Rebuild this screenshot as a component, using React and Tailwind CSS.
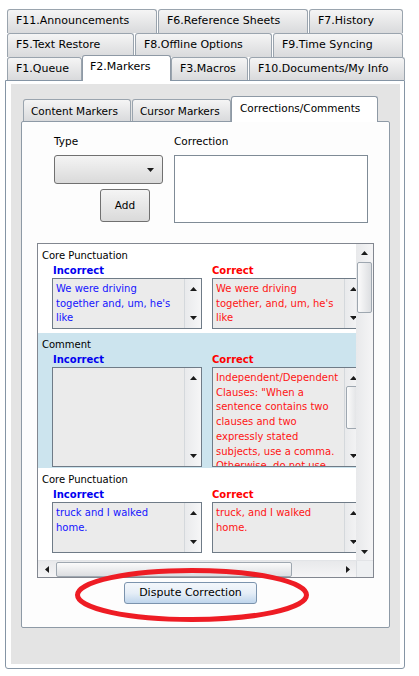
import React from 'react';

const font = "font-['DejaVu_Sans',sans-serif]";

function Tri({ dir = 'up', className = '' }) {
  const pts = {
    up: '0,4 7,4 3.5,0',
    down: '0,0 7,0 3.5,4',
    left: '4,0 4,7 0,3.5',
    right: '0,0 0,7 4,3.5',
  }[dir];
  const vertical = dir === 'up' || dir === 'down';
  return (
    <svg width={vertical ? 7 : 4} height={vertical ? 4 : 7} className={className}>
      <polygon points={pts} fill="#1a1a1a" />
    </svg>
  );
}

function TopTab({ label, w, selected }) {
  if (selected) {
    return (
      <div
        className={`relative z-10 h-[26px] -mb-px border-x border-t border-[#8e99a5] rounded-t-[3px] bg-white pl-[7px] text-[11px] leading-[21px] text-black whitespace-nowrap`}
        style={{ width: w }}
      >
        {label}
      </div>
    );
  }
  return (
    <div
      className="h-full border-x border-t border-[#9aa4ae] rounded-t-[3px] bg-linear-to-b from-[#f5f5f5] to-[#d9dadc] pl-[8px] text-[11px] leading-[22px] text-black whitespace-nowrap"
      style={{ width: w }}
    >
      {label}
    </div>
  );
}

function InnerTab({ label, w, selected }) {
  if (selected) {
    return (
      <div
        className="relative z-10 h-[26px] -mb-px border-x border-t border-[#8e99a5] rounded-t-[3px] bg-white pl-[8px] text-[10.5px] leading-[22px] text-black whitespace-nowrap"
        style={{ width: w }}
      >
        {label}
      </div>
    );
  }
  return (
    <div
      className="h-full border-x border-t border-[#9aa4ae] rounded-t-[3px] bg-linear-to-b from-[#f5f5f5] to-[#d9dadc] pl-[7px] text-[10.5px] leading-[22px] text-black whitespace-nowrap"
      style={{ width: w }}
    >
      {label}
    </div>
  );
}

function BoxScroll({ thumb }) {
  return (
    <div className="w-[17px] shrink-0 flex flex-col border-l border-[#d4d8dc] bg-linear-to-r from-[#e9eaec] to-[#f6f6f7]">
      <div className="h-[17px] flex items-center justify-center pt-[3px]">
        <Tri dir="up" />
      </div>
      {thumb ? (
        <div className="mx-[1px] mt-px h-[43px] rounded-[2px] border border-[#9ea7b0] bg-linear-to-r from-[#fbfbfb] to-[#dcdee1]" />
      ) : null}
      <div className="flex-1" />
      <div className="h-[17px] flex items-center justify-center pb-[3px]">
        <Tri dir="down" />
      </div>
    </div>
  );
}

function TextBox({ lines, color, h, thumb }) {
  return (
    <div
      className="w-[150px] shrink-0 flex border border-[#6f7b87] bg-[#ebebeb]"
      style={{ height: h }}
    >
      <div className={`flex-1 overflow-hidden pl-[3px] pt-[3px] text-[10px] leading-[14.7px] whitespace-nowrap ${color}`}>
        {lines.map((l, i) => (
          <div key={i}>{l}</div>
        ))}
      </div>
      <BoxScroll thumb={thumb} />
    </div>
  );
}

function Item({ title, incorrect, correct, h, selected, pb, thumb }) {
  return (
    <div className={`pt-[4px] ${selected ? 'bg-[#cce4ee]' : ''}`} style={{ paddingBottom: pb }}>
      <div className="h-[15px] pl-[4px] text-[10px] leading-[15px] text-black">{title}</div>
      <div className="h-[15px] flex text-[10px] leading-[15px] font-bold">
        <div className="w-[174px] pl-[15px] text-[#0000f0]">Incorrect</div>
        <div className="text-[#ff0000]">Correct</div>
      </div>
      <div className="flex pl-[14px] gap-[10px] w-[400px]">
        <TextBox lines={incorrect} color="text-[#1414ff]" h={h} />
        <TextBox lines={correct} color="text-[#ff1414]" h={h} thumb={thumb} />
      </div>
    </div>
  );
}

export default function App() {
  return (
    <div className={`relative w-[419px] h-[676px] bg-white overflow-hidden ${font}`}>
      {/* top tab rows */}
      <div className="pt-[9px] pl-[7px]">
        <div className="flex h-[24px] gap-[1px]">
          <TopTab label="F11.Announcements" w={150} />
          <TopTab label="F6.Reference Sheets" w={150} />
          <TopTab label="F7.History" w={94} />
        </div>
        <div className="flex h-[24px] gap-[1px]">
          <TopTab label="F5.Text Restore" w={127} />
          <TopTab label="F8.Offline Options" w={137} />
          <TopTab label="F9.Time Syncing" w={130} />
        </div>
        <div className="flex items-end h-[23px]">
          <TopTab label="F1.Queue" w={75} />
          <TopTab label="F2.Markers" w={89} selected />
          <TopTab label="F3.Macros" w={77} />
          <div className="w-[1px]" />
          <TopTab label="F10.Documents/My Info" w={156} />
        </div>
      </div>

      {/* outer panel */}
      <div className="ml-[5px] w-[400px] h-[589px] border border-[#8595a5] rounded-b-[3px] bg-white pt-[3px] pl-[5px] pr-[4px] pb-[4px]">
        <div className="h-full bg-[#e4e4e4] pt-[15px] pl-[10px] pr-[10px]">
          {/* inner tabs */}
          <div className="flex items-end h-[22px] pl-[2px]">
            <InnerTab label="Content Markers" w={108} />
            <div className="w-[1px]" />
            <InnerTab label="Cursor Markers" w={99} />
            <InnerTab label="Corrections/Comments" w={147} selected />
          </div>

          {/* tab panel */}
          <div className="w-[369px] h-[507px] border border-[#8e9aa6] rounded-[2px] bg-[#fdfdfd]">
            <div className="flex items-start pt-[12px] pl-[32px]">
              <div className="w-[109px] flex flex-col">
                <div className="h-[14px] text-[10.5px] leading-[14px] text-black">Type</div>
                <div className="mt-[7px] h-[29px] border border-[#707070] rounded-[3px] bg-linear-to-b from-[#f4f4f4] to-[#dadada] flex items-center justify-end pr-[8px]">
                  <Tri dir="down" />
                </div>
                <div className="mt-[5px] ml-[46px] w-[50px] h-[33px] border border-[#707070] rounded-[3px] bg-linear-to-b from-[#f4f4f4] to-[#dadada] flex items-center justify-center text-[10.5px] text-black">
                  Add
                </div>
              </div>
              <div className="ml-[11px] w-[194px] flex flex-col">
                <div className="h-[14px] text-[10.5px] leading-[14px] text-black">Correction</div>
                <div className="mt-[7px] h-[68px] border border-[#7f8b96] bg-white" />
              </div>
            </div>

            {/* list */}
            <div className="mt-[20px] ml-[15px] w-[337px] h-[335px] border border-[#828790] bg-white flex flex-col">
              <div className="flex h-[316px]">
                <div className="w-[318px] overflow-hidden">
                  <Item
                    title="Core Punctuation"
                    incorrect={['We were driving', "together and, um, he's", 'like']}
                    correct={['We were driving', "together, and, um, he's", 'like']}
                    h={51}
                    pb={4}
                  />
                  <Item
                    title="Comment"
                    incorrect={[]}
                    correct={[
                      'Independent/Dependent',
                      'Clauses: "When a',
                      'sentence contains two',
                      'clauses and two',
                      'expressly stated',
                      'subjects, use a comma.',
                      'Otherwise, do not use',
                    ]}
                    h={100}
                    pb={1}
                    selected
                    thumb
                  />
                  <Item
                    title="Core Punctuation"
                    incorrect={['truck and I walked', 'home.']}
                    correct={['truck, and I walked', 'home.']}
                    h={51}
                    pb={4}
                  />
                </div>
                {/* vertical scrollbar */}
                <div className="w-[17px] flex flex-col bg-linear-to-r from-[#e8e9eb] to-[#f5f5f6]">
                  <div className="h-[17px] flex items-center justify-center">
                    <Tri dir="up" />
                  </div>
                  <div className="mx-[1px] mt-px h-[51px] rounded-[2px] border border-[#9ea7b0] bg-linear-to-r from-[#fbfbfb] to-[#dcdee1]" />
                  <div className="flex-1" />
                  <div className="h-[17px] flex items-center justify-center">
                    <Tri dir="down" />
                  </div>
                </div>
              </div>
              <div className="flex h-[17px] border-t border-[#e2e4e7]">
                <div className="w-[318px] flex items-center bg-linear-to-b from-[#e8e9eb] to-[#f5f5f6]">
                  <div className="w-[17px] flex justify-center">
                    <Tri dir="left" />
                  </div>
                  <div className="ml-px w-[236px] h-[15px] rounded-[2px] border border-[#9ea7b0] bg-linear-to-b from-[#fbfbfb] to-[#dcdee1]" />
                  <div className="flex-1" />
                  <div className="w-[17px] flex justify-center">
                    <Tri dir="right" />
                  </div>
                </div>
                <div className="w-[17px] bg-[#eef0f2] border-l border-[#dcdfe3]" />
              </div>
            </div>

            <div className="mt-[4px] ml-[102px] w-[133px] h-[22px] border border-[#7b93ad] rounded-[3px] bg-linear-to-b from-[#f3f7fb] via-[#e6eef7] to-[#bfd5ec] flex items-center justify-center text-[11px] text-black">
              Dispute Correction
            </div>
          </div>
        </div>
      </div>

      {/* red annotation ellipse */}
      <svg className="absolute left-[74px] top-[568px]" width="236" height="56">
        <ellipse cx="118" cy="27" rx="114.5" ry="24.5" fill="none" stroke="#ee1c24" strokeWidth="5" />
      </svg>
    </div>
  );
}
